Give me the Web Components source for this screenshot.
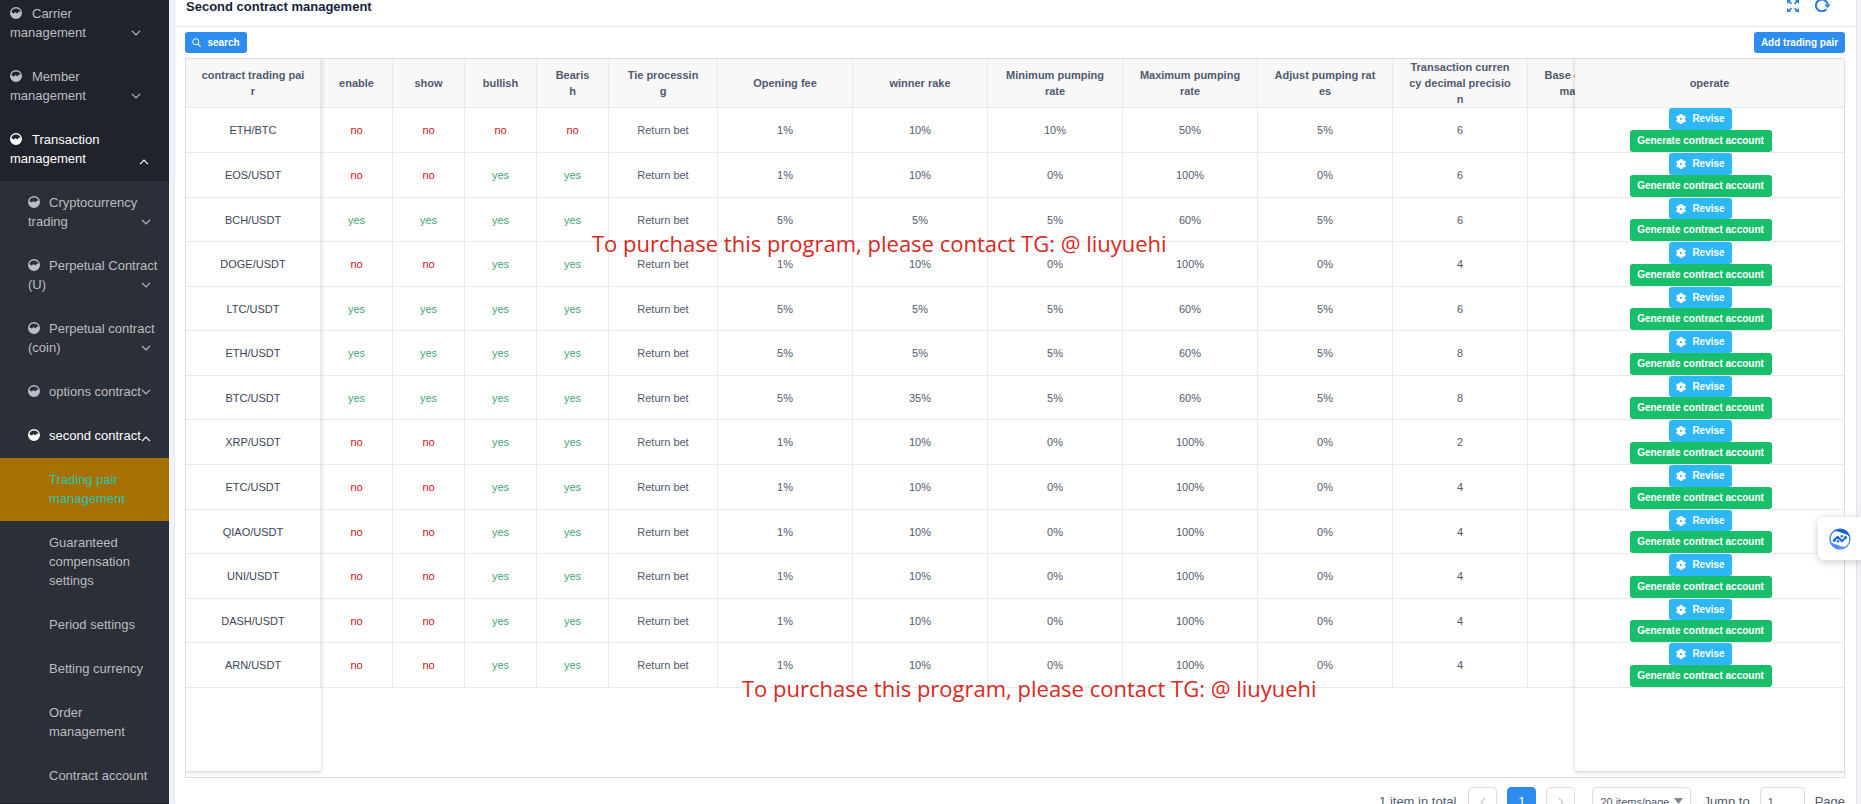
<!DOCTYPE html>
<html lang="en">
<head>
<meta charset="utf-8">
<title>Second contract management</title>
<style>
html, body { margin: 0; height: 100%; overflow: hidden; }
body { font: 13px/19px "Liberation Sans", Arial, sans-serif; color: #515a6e; background: #f0f2f8; }
</style>
</head>
<body>
<admin-app></admin-app>
<script>
const ICONS = {
  gauge: '<svg viewBox="0 0 12 12" width="12" height="12"><path d="M6 0a6 6 0 1 0 0 12A6 6 0 0 0 6 0zm0 1.4A4.6 4.6 0 0 1 10.600 5L9 4.600 7.300 6.400 5.500 4.900 3.900 6.500 1.400 5.300A4.600 4.600 0 0 1 6 1.400z" fill="currentColor"/></svg>',
  chevron: '<svg viewBox="0 0 10 6" width="10" height="6"><path d="M1 .9l4 4 4-4" fill="none" stroke="currentColor" stroke-width="1.2"/></svg>',
  search: '<svg viewBox="0 0 10 10" width="9" height="9"><circle cx="4.2" cy="4.2" r="3.4" fill="none" stroke="currentColor" stroke-width="1.1"/><path d="M6.7 6.7L9.5 9.5" stroke="currentColor" stroke-width="1.2"/></svg>',
  gear: '<svg viewBox="0 0 10 10" width="10" height="10"><g fill="currentColor"><path fill-rule="evenodd" d="M5 1a4 4 0 1 0 0 8 4 4 0 0 0 0-8zm0 2.900a1.100 1.100 0 1 1 0 2.200 1.100 1.100 0 0 1 0-2.200z"/><path d="M3.800 0h2.400l.3 2H3.500zM3.800 10h2.400l.3-2H3.500zM0 3.500l1.200-2L3 2.500 1.800 4.400zM10 3.500l-1.200-2L7 2.500l1.200 1.900zM0 6.500l1.200 2L3 7.500 1.800 5.600zM10 6.500l-1.200 2L7 7.500l1.200-1.900z"/></g></svg>',
  expand: '<svg viewBox="0 0 12 12" width="12" height="12"><g fill="#2d7ddb"><path d="M0 0h4L2.9 1.1 5 3.2 3.8 4.4 1.6 2.3 0 4zM12 0v4l-1.6-1.7-2.2 2.1L7 3.2l2.1-2.1L8 0zM0 12V8l1.6 1.7 2.2-2.1L5 8.8 2.9 10.9 4 12zM12 12H8l1.1-1.1L7 8.8l1.2-1.2 2.2 2.1L12 8z"/></g></svg>',
  refresh: '<svg viewBox="0 0 16 14" width="16" height="14"><path d="M11.4 11.200A5.900 5.900 0 1 1 12.700 6.500" fill="none" stroke="#2d7ddb" stroke-width="2.100"/><path d="M9.400 6.400h6.400L12.600 9.900z" fill="#2d7ddb"/></svg>'
};

const define = (name, html, setup) => {
  const template = document.createElement('template');
  template.innerHTML = html;
  customElements.define(name, class extends HTMLElement {
    constructor() {
      super();
      this.attachShadow({ mode: 'open' }).append(template.content.cloneNode(true));
    }
    connectedCallback() { if (setup) setup(this, this.shadowRoot); }
  });
};

define('ui-icon', `<style>:host{display:inline-block;line-height:0}svg{display:block}</style><span></span>`,
  (el, root) => { root.querySelector('span').innerHTML = ICONS[el.getAttribute('name')]; });

/* Small filled button: primary, info or success */
define('ui-button', `
<style>
:host { display: block; }
button { display: flex; align-items: center; justify-content: center; gap: 6px; box-sizing: border-box; width: 100%; height: var(--button-height, 21px);
  margin: 0; padding: 0 7px; border: 0; border-radius: 3px; background: #2d8cf0; color: #fff; font: bold 10px/16px "Liberation Sans", Arial, sans-serif; white-space: nowrap; }
:host([kind=info]) button { background: #2db7f5; }
:host([kind=success]) button { background: #19be6b; }
</style>
<button type="button"><slot name="icon"></slot><slot></slot></button>`);

define('nav-item', `
<style>
:host { display: block; color: #bcbdc0; --indent: 10px; }
:host([level="2"]) { --indent: 28px; }
:host([level="3"]) { --indent: 49px; }
:host([open]) { color: #fff; }
:host([current]) { background: #a67100; color: #2bc5ad; }
a { position: relative; display: block; padding: 12px 0 13px var(--indent); color: inherit; text-decoration: none; }
:host([first]) a { padding-top: 4px; }
.mark { margin-right: 10px; vertical-align: -1px; }
:host([level="2"]) .mark { margin-right: 9px; }
.arrow { position: absolute; right: 28px; bottom: 19px; }
:host([open]) .arrow { right: 20px; bottom: 16px; transform: rotate(180deg); }
:host([level="2"]) .arrow { right: 18px; }
</style>
<a href="#"><slot></slot></a>`,
  (el, root) => {
    if (el.getAttribute('level') === '3') return;
    const a = root.querySelector('a');
    a.insertAdjacentHTML('afterbegin', '<ui-icon class="mark" name="gauge"></ui-icon>');
    a.insertAdjacentHTML('beforeend', '<ui-icon class="arrow" name="chevron"></ui-icon>');
  });

define('side-nav', `
<style>
:host { display: block; background: #20232b; overflow: hidden; }
.sub { background: #2b2f37; padding-bottom: 5px; }
</style>
<nav>
<nav-item first>Carrier<br>management</nav-item>
<nav-item>Member<br>management</nav-item>
<nav-item open>Transaction<br>management</nav-item>
<div class="sub">
<nav-item level="2">Cryptocurrency<br>trading</nav-item>
<nav-item level="2">Perpetual Contract<br>(U)</nav-item>
<nav-item level="2">Perpetual contract<br>(coin)</nav-item>
<nav-item level="2">options contract</nav-item>
<nav-item level="2" open>second contract</nav-item>
<nav-item level="3" current>Trading pair<br>management</nav-item>
<nav-item level="3">Guaranteed<br>compensation<br>settings</nav-item>
<nav-item level="3">Period settings</nav-item>
<nav-item level="3">Betting currency</nav-item>
<nav-item level="3">Order<br>management</nav-item>
<nav-item level="3">Contract account</nav-item>
</div>
</nav>`);

/* name, four yes/no flags, opening fee, winner rake, minimum, maximum, adjust, precision */
const PAIRS = [
  ['ETH/BTC', 'nnnn', '1%', '10%', '10%', '50%', '5%', 6],
  ['EOS/USDT', 'nnyy', '1%', '10%', '0%', '100%', '0%', 6],
  ['BCH/USDT', 'yyyy', '5%', '5%', '5%', '60%', '5%', 6],
  ['DOGE/USDT', 'nnyy', '1%', '10%', '0%', '100%', '0%', 4],
  ['LTC/USDT', 'yyyy', '5%', '5%', '5%', '60%', '5%', 6],
  ['ETH/USDT', 'yyyy', '5%', '5%', '5%', '60%', '5%', 8],
  ['BTC/USDT', 'yyyy', '5%', '35%', '5%', '60%', '5%', 8],
  ['XRP/USDT', 'nnyy', '1%', '10%', '0%', '100%', '0%', 2],
  ['ETC/USDT', 'nnyy', '1%', '10%', '0%', '100%', '0%', 4],
  ['QIAO/USDT', 'nnyy', '1%', '10%', '0%', '100%', '0%', 4],
  ['UNI/USDT', 'nnyy', '1%', '10%', '0%', '100%', '0%', 4],
  ['DASH/USDT', 'nnyy', '1%', '10%', '0%', '100%', '0%', 4],
  ['ARN/USDT', 'nnyy', '1%', '10%', '0%', '100%', '0%', 4]
];
const table = (widths, heads, row) => `<table style="width:${widths.reduce((a, b) => a + b)}px">
<colgroup>${widths.map(w => `<col style="width:${w}px">`).join('')}</colgroup>
<thead><tr>${heads.map(h => `<th scope="col">${h}</th>`).join('')}</tr></thead>
<tbody>${PAIRS.map(p => `<tr>${row(p).map(c => `<td>${c}</td>`).join('')}</tr>`).join('')}</tbody></table>`;
const flag = f => f === 'y' ? '<span class="yes">yes</span>' : '<span class="no">no</span>';

define('pair-table', `
<style>
:host { display: flex; padding-bottom: 5px; border: 1px solid #dcdee2; background: #fff; font-size: 11px; line-height: 16px; }
.pane { flex: none; padding-bottom: 83px; border-bottom: 1px solid #dcdee2; box-shadow: 0 0 5px rgba(0,0,0,.2); z-index: 1; background: #fff; }
.fixed-left { clip-path: inset(0 -8px -8px 0); }
.fixed-left td { color: #3c4456; }
.fixed-right { clip-path: inset(0 0 -8px -8px); }
.scroll { flex: 1; min-width: 0; overflow: hidden; }
table { table-layout: fixed; border-collapse: separate; border-spacing: 0; text-align: center; }
th, td { box-sizing: border-box; padding: 0; border-right: 1px solid #e8eaec; border-bottom: 1px solid #e8eaec; }
.fixed-right th, .fixed-right td { border-right: 0; }
thead tr { height: 49px; }
th { background: #f8f8f9; font-weight: bold; white-space: nowrap; }
tbody tr { height: 45px; --button-height: 22px; }
tbody tr:is(:nth-child(3), :nth-child(5), :nth-child(7), :nth-child(10), :nth-child(12)) { height: 44px; --button-height: 21px; }
.yes { color: #3fa675; }
.no { color: #cc1220; }
.actions { display: flex; flex-direction: column; align-items: center; padding-right: 18px; }
.edit { width: 63px; }
.create { width: 142px; --button-height: 22px; }
</style>
<div class="pane fixed-left">${table([135], ['contract trading pai<br>r'], p => [p[0]])}</div>
<div class="scroll">${table([72, 72, 72, 72, 109, 135, 135, 135, 135, 135, 135, 135],
  ['enable', 'show', 'bullish', 'Bearis<br>h', 'Tie processin<br>g', 'Opening fee', 'winner rake', 'Minimum pumping<br>rate', 'Maximum pumping<br>rate', 'Adjust pumping rat<br>es', 'Transaction curren<br>cy decimal precisio<br>n', 'Base currency deci<br>mal precision'],
  p => [...[...p[1]].map(flag), 'Return bet', ...p.slice(2), ''])}</div>
<div class="pane fixed-right">${table([269], ['operate'], () => [`<div class="actions"><ui-button class="edit" kind="info"><ui-icon slot="icon" name="gear"></ui-icon>Revise</ui-button><ui-button class="create" kind="success">Generate contract account</ui-button></div>`])}</div>`);

define('page-bar', `
<style>
:host { display: flex; justify-content: flex-end; align-items: center; padding-top: 9px; }
button, select, input { box-sizing: border-box; height: 29px; margin: 0; border: 1px solid #dcdee2; border-radius: 4px; background: #fff; color: #515a6e; font: 11px/16px "Liberation Sans", Arial, sans-serif; }
button { width: 29px; padding: 0; margin-left: 10px; display: grid; place-items: center; color: #c5c8ce; }
.total { margin-right: 2px; }
.current { background: #2d8cf0; border-color: #2d8cf0; color: #fff; font-size: 13px; }
.prev { transform: rotate(90deg); }
.next { transform: rotate(-90deg); }
.size { position: relative; margin: 0 12px 0 17px; }
select { appearance: none; width: 99px; padding: 0 7px; display: block; }
.size svg { position: absolute; right: 8px; top: 11px; }
input { width: 45px; padding: 0 7px; margin: 0 10px; }
label { display: flex; align-items: center; }
</style>
<span class="total">1 item in total</span>
<button type="button" aria-label="Previous page"><ui-icon class="prev" name="chevron"></ui-icon></button>
<button type="button" class="current">1</button>
<button type="button" aria-label="Next page"><ui-icon class="next" name="chevron"></ui-icon></button>
<div class="size"><select aria-label="Page size"><option>20 items/page</option></select><svg width="9" height="6"><path d="M0 0h9L4.500 6z" fill="#808695"/></svg></div>
<label>Jump to<input value="1"></label><span>Page</span>`);

define('page-card', `
<style>
:host { display: block; background: #fff; border: solid #e3e6ee; border-width: 0 1px; }
header { display: flex; justify-content: space-between; align-items: center; height: 26px; box-sizing: border-box; padding: 0 25px 13px 11px; border-bottom: 0; }
h1 { margin: 0; font-size: 13px; line-height: 13px; color: #17233d; }
.tools { display: flex; gap: 16px; align-items: center; padding-top: 2px; }
.tools a { display: block; }
.rule { border-top: 1px solid #e8eaec; padding: 5px 11px 0 10px; }
.bar { display: flex; justify-content: space-between; margin-bottom: 5px; }
.find { width: 62px; }
.add { width: 91px; }
</style>
<header><h1>Second contract management</h1><div class="tools"><a href="#" aria-label="Full screen"><ui-icon name="expand"></ui-icon></a><a href="#" aria-label="Refresh"><ui-icon name="refresh"></ui-icon></a></div></header>
<div class="rule">
<div class="bar"><ui-button class="find"><ui-icon slot="icon" name="search"></ui-icon>search</ui-button><ui-button class="add">Add trading pair</ui-button></div>
<pair-table></pair-table>
<page-bar></page-bar>
</div>`);

define('contact-note', `
<style>:host { position: absolute; z-index: 3; font: 22px/32px "Open Sans", sans-serif; color: #d9281e; white-space: nowrap; pointer-events: none; }</style><slot></slot>`);

define('float-badge', `
<style>
:host { position: absolute; z-index: 4; right: 0; top: 517px; }
button { display: grid; place-items: center; box-sizing: border-box; width: 43px; height: 43px; padding: 0; border: 0; border-radius: 6px 0 0 6px; background: #fff; box-shadow: 0 2px 8px rgba(0,0,0,.2); }
</style>
<button type="button" aria-label="Assistant"><svg width="22" height="22" viewBox="0 0 22 22"><circle cx="11" cy="11" r="10" fill="#fff" stroke="#3b7fe0" stroke-width="1.2"/><path d="M4 3.600A10.300 10.300 0 0 1 21 9.500C18.500 5.800 15.500 6 12 4.500 9 3.100 6.500 2.800 4 3.600z" fill="#1560d0"/><path d="M18 18.400A10.300 10.300 0 0 1 1 12.500C3.500 16.200 6.500 16 10 17.500c3 1.400 5.500 1.700 8 .9z" fill="#4d94f5"/><path d="M5.300 12.300L8.600 8.800l4.400 4.500 3.500-4" fill="none" stroke="#1f66d6" stroke-width="2" stroke-linecap="round" stroke-linejoin="round"/><g fill="#1f66d6"><circle cx="5.300" cy="12.300" r="1.500"/><circle cx="9" cy="13.300" r="1.200"/><circle cx="12.800" cy="8.300" r="1.200"/><circle cx="16.500" cy="9.500" r="1.500"/></g></svg></button>`);

define('admin-app', `
<style>
:host { position: relative; display: grid; grid-template-columns: 169px minmax(0, 1fr); height: 100vh; overflow: hidden; }
page-card { margin: 0 4px 0 5px; }
.first { left: 592px; top: 227px; }
.second { left: 742px; top: 672px; }
</style>
<side-nav></side-nav>
<page-card></page-card>
<contact-note class="first">To purchase this program, please contact TG: @ liuyuehi</contact-note>
<contact-note class="second">To purchase this program, please contact TG: @ liuyuehi</contact-note>
<float-badge></float-badge>`);
</script>
</body>
</html>
